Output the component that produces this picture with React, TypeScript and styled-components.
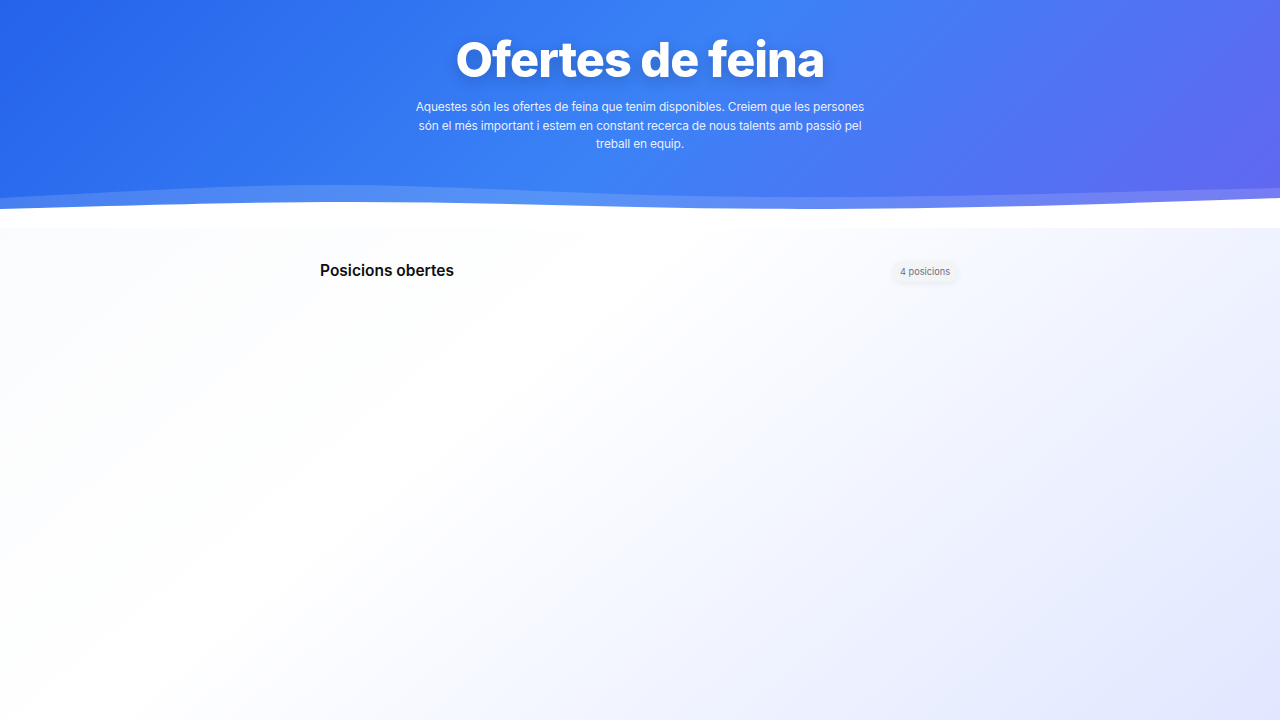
import React from "react";
import styled, { createGlobalStyle } from "styled-components";

const GlobalStyle = createGlobalStyle`
  * { box-sizing: border-box; }
  html, body { margin: 0; padding: 0; }
  body {
    font-family: Inter, "Noto Sans", "Liberation Sans", sans-serif;
    background: #ffffff;
    -webkit-font-smoothing: antialiased;
  }
`;

const Page = styled.div`
  min-height: 720px;
  display: flex;
  flex-direction: column;
  background: linear-gradient(140deg, #f8fafc 0%, #ffffff 45%, #e0e7ff 100%);
`;

const Hero = styled.header`
  position: relative;
  height: 228px;
  padding-top: 31px;
  display: flex;
  flex-direction: column;
  align-items: center;
  text-align: center;
  color: #fff;
  background: linear-gradient(135deg, #2563eb 0%, #3b82f6 50%, #6366f1 100%);
  overflow: hidden;
`;

const Title = styled.h1`
  margin: 0;
  font-size: 48.5px;
  line-height: 58px;
  font-weight: 800;
  letter-spacing: -0.02em;
  text-shadow: 0 4px 14px rgba(15, 23, 42, 0.22);
`;

const Lead = styled.p`
  margin: 9px 0 0;
  max-width: 452px;
  font-size: 11.9px;
  line-height: 18.5px;
  letter-spacing: -0.15px;
  color: rgba(255, 255, 255, 0.9);
`;

const Wave = styled.svg`
  position: absolute;
  left: 0;
  bottom: 0;
  width: 100%;
  height: 48px;
  display: block;
`;

const Main = styled.main`
  width: 640px;
  margin: 0 auto;
  padding-top: 31px;
`;

const SectionHead = styled.div`
  display: flex;
  align-items: center;
  justify-content: space-between;
`;

const SectionTitle = styled.h2`
  margin: 0;
  font-size: 15.5px;
  line-height: 24px;
  font-weight: 600;
  color: #0f0f10;
`;

const Badge = styled.span`
  margin-right: 2px;
  padding: 4px 8px;
  border-radius: 999px;
  font-size: 9.2px;
  line-height: 13px;
  color: #6b7280;
  background: #f3f4f6;
  box-shadow: 0 2px 6px rgba(15, 23, 42, 0.06);
`;

export default function App() {
  return (
    <Page>
      <GlobalStyle />
      <Hero>
        <Title>Ofertes de feina</Title>
        <Lead>
          Aquestes són les ofertes de feina que tenim disponibles. Creiem que les persones
          són el més important i estem en constant recerca de nous talents amb passió pel
          treball en equip.
        </Lead>
        <Wave viewBox="0 0 1280 48" preserveAspectRatio="none">
          <path
            d="M0,18 C150,10 250,4 350,5 C500,7 600,17 800,17 C1000,17 1150,10 1280,8 L1280,48 L0,48 Z"
            fill="rgba(255,255,255,0.14)"
          />
          <path
            d="M0,29 C150,25 250,22 350,22 C500,22 650,29 800,29 C1000,29 1150,22 1280,18 L1280,48 L0,48 Z"
            fill="#ffffff"
          />
        </Wave>
      </Hero>
      <Main>
        <SectionHead>
          <SectionTitle>Posicions obertes</SectionTitle>
          <Badge>4 posicions</Badge>
        </SectionHead>
      </Main>
    </Page>
  );
}
